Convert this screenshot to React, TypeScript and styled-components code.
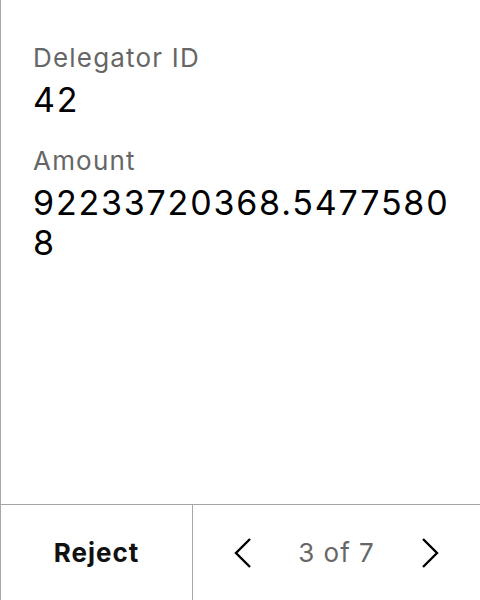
import React from "react";
import styled, { createGlobalStyle } from "styled-components";

const GlobalStyle = createGlobalStyle`
  html, body {
    margin: 0;
    padding: 0;
    background: #ffffff;
  }
  body {
    font-family: Inter, "Noto Sans", sans-serif;
    -webkit-font-smoothing: antialiased;
  }
  * { box-sizing: border-box; }
`;

const Screen = styled.div`
  width: 480px;
  height: 600px;
  display: flex;
  flex-direction: column;
  border-left: 1px solid #a6a6a6;
  background: #ffffff;
`;

const Content = styled.div`
  flex: 1;
  padding: 42px 22px 0 32px;
  display: flex;
  flex-direction: column;
  gap: 25px;
`;

const Field = styled.div`
  display: flex;
  flex-direction: column;
  gap: 6px;
`;

const Label = styled.div`
  font-size: 26px;
  line-height: 32px;
  letter-spacing: 1.2px;
  color: #666666;
`;

const Value = styled.div`
  font-size: 34px;
  line-height: 40px;
  letter-spacing: 1.8px;
  color: #000000;
  word-break: break-all;
`;

const Footer = styled.div`
  height: 96px;
  border-top: 1px solid #a6a6a6;
  display: grid;
  grid-template-columns: 192px 1fr;
`;

const RejectButton = styled.button`
  all: unset;
  display: flex;
  align-items: center;
  justify-content: center;
  border-right: 1px solid #a6a6a6;
  font-family: Inter, sans-serif;
  font-weight: 700;
  font-size: 26px;
  letter-spacing: 1px;
  color: #111111;
`;

const Pager = styled.div`
  display: flex;
  align-items: center;
  justify-content: center;
`;

const NavButton = styled.button`
  all: unset;
  width: 64px;
  height: 64px;
  display: flex;
  align-items: center;
  justify-content: center;
`;

const PageText = styled.span`
  width: 123px;
  text-align: center;
  font-size: 26px;
  letter-spacing: 1px;
  color: #666666;
`;

const Chevron: React.FC<{ dir: "left" | "right" }> = ({ dir }) => (
  <svg width="18" height="30" viewBox="0 0 18 30" fill="none">
    <polyline
      points={dir === "left" ? "16,1 2,15 16,29" : "2,1 16,15 2,29"}
      stroke="#000"
      strokeWidth="2.4"
      strokeLinecap="butt"
      strokeLinejoin="miter"
    />
  </svg>
);

export default function App() {
  return (
    <>
      <GlobalStyle />
      <Screen>
        <Content>
          <Field>
            <Label>Delegator ID</Label>
            <Value>42</Value>
          </Field>
          <Field>
            <Label>Amount</Label>
            <Value>92233720368.54775808</Value>
          </Field>
        </Content>
        <Footer>
          <RejectButton>Reject</RejectButton>
          <Pager>
            <NavButton aria-label="Previous">
              <Chevron dir="left" />
            </NavButton>
            <PageText>3 of 7</PageText>
            <NavButton aria-label="Next">
              <Chevron dir="right" />
            </NavButton>
          </Pager>
        </Footer>
      </Screen>
    </>
  );
}
